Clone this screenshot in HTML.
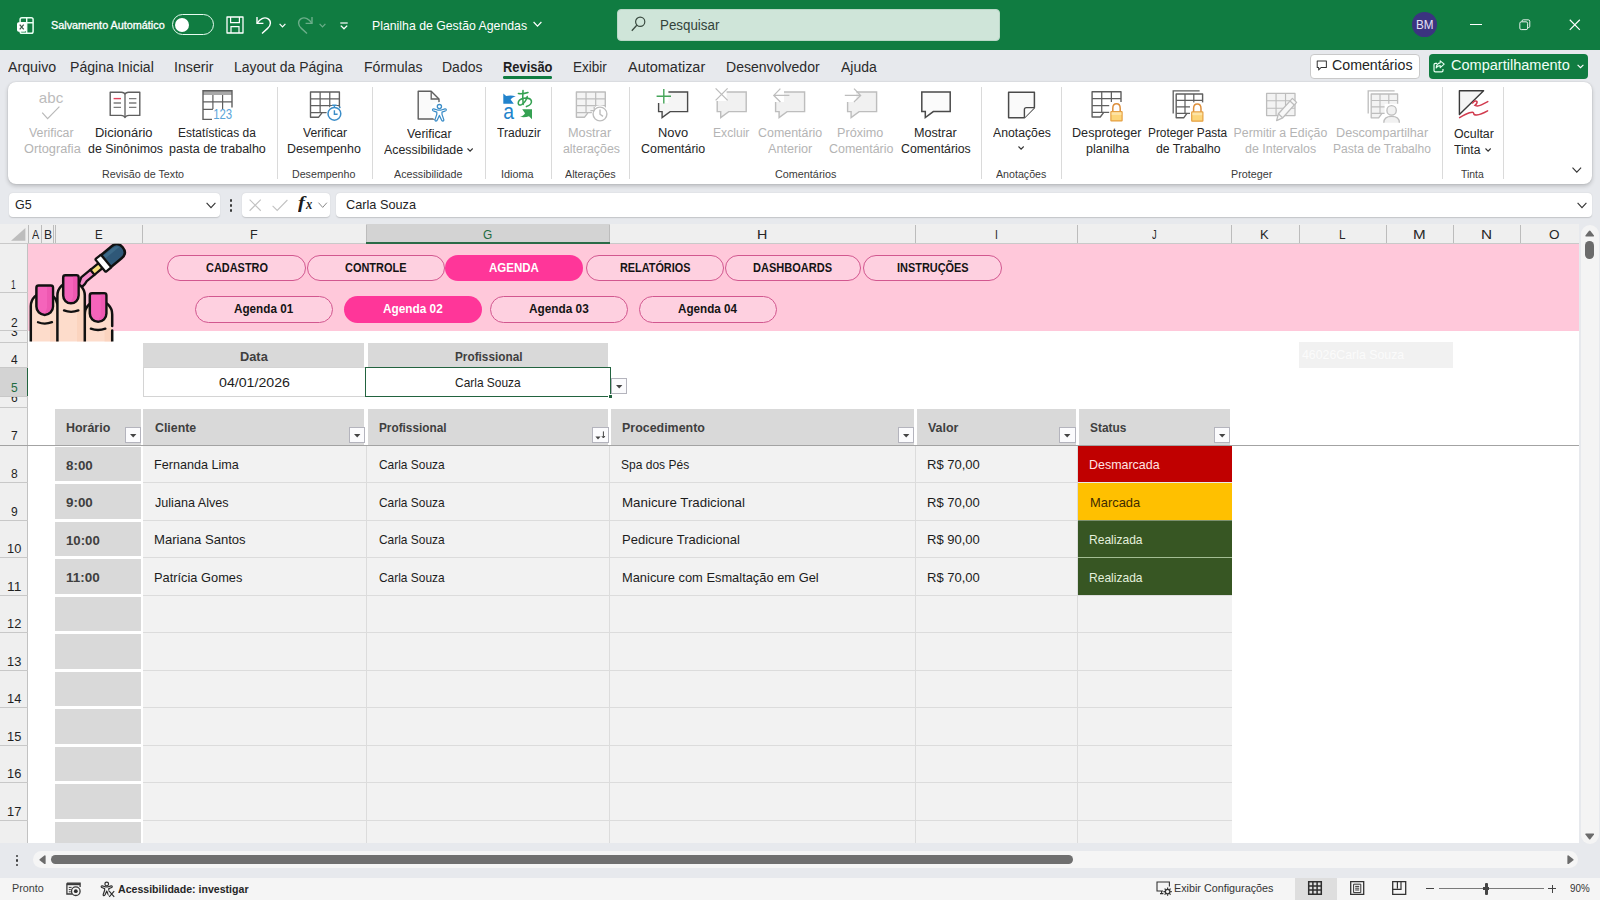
<!DOCTYPE html>
<html lang="pt-BR"><head><meta charset="utf-8"><title>Planilha de Gestão Agendas - Excel</title>
<style>
html,body{margin:0;padding:0;}
body{width:1600px;height:900px;overflow:hidden;position:relative;background:#e7e9ed;font-family:"Liberation Sans",sans-serif;}
#app{position:absolute;left:0;top:0;width:1600px;height:900px;overflow:hidden;}
#app div,#app svg,#app span.t{position:absolute;box-sizing:border-box;}
#app span.t{white-space:pre;transform-origin:0 0;display:block;}
svg{overflow:visible;}
svg text{font-family:"Liberation Sans",sans-serif;}
</style></head><body><div id="app">
<div style="left:0px;top:0px;width:1600px;height:49.5px;background:#107c41;"></div>
<svg style="left:16.5px;top:16.5px;" width="17" height="17" viewBox="0 0 17 17">
<rect x="3.1" y="0.8" width="13" height="15.4" rx="1.8" fill="none" stroke="#eafff3" stroke-width="1.5"/>
<path d="M3.1 5.7H16.1M9.7 0.8V16.2" stroke="#eafff3" stroke-width="1.4" fill="none"/>
<rect x="0" y="5.3" width="9.3" height="9.5" rx="1.7" fill="#fff"/>
<path d="M2.7 7.7L6.7 12.4M6.7 7.7L2.7 12.4" stroke="#3c5a49" stroke-width="1.25" fill="none"/>
</svg>
<span class="t" style="left:50.60px;top:20.03px;font-size:10.6px;line-height:10.6px;color:#ffffff;transform:scaleX(1.0215);-webkit-text-stroke:0.3px #ffffff;">Salvamento Automático</span>
<div style="left:172px;top:14px;width:42px;height:21px;border:1.5px solid #e6fbef;border-radius:11px;"></div>
<div style="left:175.2px;top:17.6px;width:14px;height:14px;background:#fff;border-radius:50%;"></div>
<svg style="left:226px;top:16px;" width="18" height="18" viewBox="0 0 18 18">
<path d="M1 1H17V17H1Z" fill="none" stroke="#fff" stroke-width="1.3" stroke-linejoin="round"/>
<path d="M4.6 1V6.6H13.4V1" fill="none" stroke="#fff" stroke-width="1.2"/>
<path d="M5 17V10.6H13V17" fill="none" stroke="#fff" stroke-width="1.2"/>
</svg>
<svg style="left:255px;top:15px;" width="18" height="20" viewBox="0 0 18 20">
<path d="M2 2V8.4H8.4" fill="none" stroke="#fff" stroke-width="1.4"/>
<path d="M2.3 8.2C4.6 4 9.2 1.6 12.8 3.6C16.6 5.8 16 10.6 12.6 13.4L7 18.6" fill="none" stroke="#fff" stroke-width="1.4"/>
</svg>
<svg style="left:279px;top:22.5px;" width="7" height="5" viewBox="0 0 7 5"><path d="M0.6 0.8L3.5 3.8L6.4 0.8" fill="none" stroke="#fff" stroke-width="1.2"/></svg>
<svg style="left:296px;top:15px;" width="18" height="20" viewBox="0 0 18 20">
<g opacity="0.38"><path d="M16 2V8.4H9.6" fill="none" stroke="#fff" stroke-width="1.4"/>
<path d="M15.7 8.2C13.4 4 8.8 1.6 5.2 3.6C1.4 5.8 2 10.6 5.4 13.4L11 18.6" fill="none" stroke="#fff" stroke-width="1.4"/></g>
</svg>
<svg style="left:319px;top:22.5px;" width="7" height="5" viewBox="0 0 7 5"><path d="M0.6 0.8L3.5 3.8L6.4 0.8" fill="none" stroke="#fff" stroke-width="1.2" opacity="0.38"/></svg>
<svg style="left:340px;top:21.5px;" width="8" height="8" viewBox="0 0 8 8"><path d="M0.3 1H7.7" stroke="#fff" stroke-width="1.2"/><path d="M0.8 3.6L4 6.8L7.2 3.6" fill="none" stroke="#fff" stroke-width="1.3"/></svg>
<span class="t" style="left:372.07px;top:18.93px;font-size:13.2px;line-height:13.2px;color:#ffffff;transform:scaleX(0.9316);">Planilha de Gestão Agendas</span>
<svg style="left:532.5px;top:21px;" width="9" height="7" viewBox="0 0 9 7"><path d="M0.6 1L4.5 5.2L8.4 1" fill="none" stroke="#fff" stroke-width="1.2"/></svg>
<div style="left:617px;top:9px;width:382.5px;height:32px;background:#cfe5d9;border-radius:4px;border:1px solid #b9d8c7;"></div>
<svg style="left:631px;top:16px;" width="15" height="16" viewBox="0 0 15 16"><circle cx="9.2" cy="5.8" r="4.6" fill="none" stroke="#3a4a40" stroke-width="1.2"/><path d="M5.8 9.2L0.8 14.8" stroke="#3a4a40" stroke-width="1.3"/></svg>
<span class="t" style="left:659.85px;top:17.85px;font-size:14px;line-height:14px;color:#33433a;transform:scaleX(0.9529);">Pesquisar</span>
<div style="left:1412.4px;top:12.4px;width:24.6px;height:24.6px;background:#3b3480;border-radius:50%;"></div>
<span class="t" style="left:1415.94px;top:19.17px;font-size:12.2px;line-height:12.2px;color:#e4e1f5;transform:scaleX(0.9574);">BM</span>
<div style="left:1470px;top:23.8px;width:11.5px;height:1.2px;background:#fff;"></div>
<svg style="left:1519.3px;top:18.7px;" width="11.6" height="11.6" viewBox="0 0 14 14"><rect x="1" y="3.4" width="9.4" height="9.4" rx="1.8" fill="none" stroke="#fff" stroke-width="1.1"/><path d="M3.6 3.2V2.6Q3.6 1 5.2 1H11.2Q13 1 13 2.8V8.8Q13 10.4 11.4 10.4H10.8" fill="none" stroke="#fff" stroke-width="1.1"/></svg>
<svg style="left:1569.4px;top:19.4px;" width="11.6" height="11.6" viewBox="0 0 12 12"><path d="M0.8 0.8L11.2 11.2M11.2 0.8L0.8 11.2" stroke="#fff" stroke-width="1.2"/></svg>
<span class="t" style="left:7.80px;top:59.75px;font-size:14px;line-height:14px;color:#2b2b2b;transform:scaleX(1.0150);">Arquivo</span>
<span class="t" style="left:70.29px;top:59.75px;font-size:14px;line-height:14px;color:#2b2b2b;transform:scaleX(1.0064);">Página Inicial</span>
<span class="t" style="left:173.79px;top:59.75px;font-size:14px;line-height:14px;color:#2b2b2b;transform:scaleX(1.0145);">Inserir</span>
<span class="t" style="left:233.60px;top:59.75px;font-size:14px;line-height:14px;color:#2b2b2b;transform:scaleX(0.9982);">Layout da Página</span>
<span class="t" style="left:364.00px;top:59.75px;font-size:14px;line-height:14px;color:#2b2b2b;transform:scaleX(1.0025);">Fórmulas</span>
<span class="t" style="left:442.00px;top:59.75px;font-size:14px;line-height:14px;color:#2b2b2b;transform:scaleX(1.0008);">Dados</span>
<span class="t" style="left:572.83px;top:59.75px;font-size:14px;line-height:14px;color:#2b2b2b;transform:scaleX(0.9664);">Exibir</span>
<span class="t" style="left:627.60px;top:59.75px;font-size:14px;line-height:14px;color:#2b2b2b;transform:scaleX(1.0341);">Automatizar</span>
<span class="t" style="left:725.80px;top:59.75px;font-size:14px;line-height:14px;color:#2b2b2b;transform:scaleX(1.0029);">Desenvolvedor</span>
<span class="t" style="left:840.80px;top:59.75px;font-size:14px;line-height:14px;color:#2b2b2b;transform:scaleX(0.9993);">Ajuda</span>
<span class="t" style="left:503.00px;top:59.75px;font-size:14px;line-height:14px;color:#1f1f1f;transform:scaleX(0.9219);font-weight:700;">Revisão</span>
<div style="left:503px;top:76.2px;width:49px;height:2.6px;background:#107c41;border-radius:1.3px;"></div>
<div style="left:1310px;top:53.5px;width:110px;height:25px;background:#fff;border:1px solid #c9c9c9;border-radius:4px;"></div>
<svg style="left:1315.6px;top:59.8px;" width="11.6" height="11" viewBox="0 0 12 12"><path d="M1 1H11V8.2H5.2L2.6 10.8V8.2H1Z" fill="none" stroke="#333" stroke-width="1.1" stroke-linejoin="round"/></svg>
<span class="t" style="left:1332.00px;top:59.12px;font-size:13.8px;line-height:13.8px;color:#242424;transform:scaleX(1.0291);">Comentários</span>
<div style="left:1428.5px;top:53.5px;width:159px;height:25px;background:#107c41;border-radius:4px;"></div>
<svg style="left:1432.8px;top:59.6px;" width="12" height="12.6" viewBox="0 0 12 12.6"><path d="M4 3.4H2.4Q1 3.4 1 4.8V10.4Q1 11.8 2.4 11.8H8.6Q10 11.8 10 10.4V9" fill="none" stroke="#eafff3" stroke-width="1.2"/><path d="M7.2 0.8L11.2 4.2L7.2 7.6V5.6C5.2 5.6 4 6.4 3.2 8C3.4 5 5 3.2 7.2 2.9Z" fill="none" stroke="#eafff3" stroke-width="1.1" stroke-linejoin="round"/></svg>
<span class="t" style="left:1450.50px;top:59.12px;font-size:13.8px;line-height:13.8px;color:#f2fff7;transform:scaleX(1.0534);">Compartilhamento</span>
<svg style="left:1576.5px;top:63.5px;" width="7" height="5" viewBox="0 0 7 5"><path d="M0.6 0.8L3.5 3.7L6.4 0.8" fill="none" stroke="#fff" stroke-width="1.1"/></svg>
<div style="left:8px;top:82px;width:1584px;height:102px;background:#ffffff;border-radius:8px;box-shadow:0 2px 4px rgba(0,0,0,0.2),0 0 1.5px rgba(0,0,0,0.14);"></div>
<div style="left:8.8px;top:193.2px;width:211.4px;height:23.8px;background:#fff;border-radius:4px;box-shadow:0 0.8px 1.2px rgba(0,0,0,0.16);"></div>
<span class="t" style="left:14.50px;top:199.33px;font-size:12.6px;line-height:12.6px;color:#242424;transform:scaleX(0.9935);">G5</span>
<svg style="left:206px;top:202px;" width="10" height="7" viewBox="0 0 10 7"><path d="M0.6 0.8L5 5.6L9.4 0.8" fill="none" stroke="#333" stroke-width="1.1"/></svg>
<div style="left:229.9px;top:199.4px;width:2.5px;height:2.5px;background:#3a3a3a;border-radius:1.25px;"></div>
<div style="left:229.9px;top:204.20000000000002px;width:2.5px;height:2.5px;background:#3a3a3a;border-radius:1.25px;"></div>
<div style="left:229.9px;top:209.0px;width:2.5px;height:2.5px;background:#3a3a3a;border-radius:1.25px;"></div>
<div style="left:242px;top:193.2px;width:88px;height:23.8px;background:#fff;border-radius:4px;box-shadow:0 0.8px 1.2px rgba(0,0,0,0.16);"></div>
<svg style="left:248.8px;top:198.8px;" width="12.4" height="12.4" viewBox="0 0 12 12"><path d="M0.6 0.6L11.4 11.4M11.4 0.6L0.6 11.4" stroke="#c2c2c2" stroke-width="1.1"/></svg>
<svg style="left:272px;top:198.6px;" width="16" height="12.4" viewBox="0 0 16 12"><path d="M0.6 6.6L5.2 11.2L15.4 0.8" fill="none" stroke="#c2c2c2" stroke-width="1.1"/></svg>
<span class="t" style="left:297.80px;top:195.43px;font-size:16.5px;line-height:16.5px;color:#1c1c1c;transform:scaleX(1.2562);font-weight:700;font-style:italic;font-family:'Liberation Serif',serif;">f</span>
<span class="t" style="left:305.73px;top:198.29px;font-size:13.6px;line-height:13.6px;color:#1c1c1c;transform:scaleX(0.9250);font-weight:700;font-style:italic;font-family:'Liberation Serif',serif;">x</span>
<svg style="left:318.4px;top:202.2px;" width="9.4" height="6.4" viewBox="0 0 9.4 6.4"><path d="M0.5 0.7L4.7 5.4L8.9 0.7" fill="none" stroke="#8a8a8a" stroke-width="1"/></svg>
<div style="left:335.5px;top:193.2px;width:1256px;height:23.8px;background:#fff;border-radius:4px;box-shadow:0 0.8px 1.2px rgba(0,0,0,0.16);"></div>
<span class="t" style="left:346.20px;top:199.33px;font-size:12.6px;line-height:12.6px;color:#242424;transform:scaleX(1.0100);">Carla Souza</span>
<svg style="left:1576.5px;top:201.8px;" width="10" height="7" viewBox="0 0 10 7"><path d="M0.6 0.8L5 5.6L9.4 0.8" fill="none" stroke="#333" stroke-width="1.1"/></svg>
<svg style="left:38px;top:88px;" width="28" height="34" viewBox="0 0 28 34">
<text x="0.8" y="14.9" font-size="14.4" fill="#bcbcbc" textLength="24.4" lengthAdjust="spacingAndGlyphs">abc</text>
<path d="M4.2 24.6L9.6 30.6L21.4 18.6" fill="none" stroke="#b9b9b9" stroke-width="1.2"/></svg>
<span class="t" style="left:29.40px;top:126.89px;font-size:12.3px;line-height:12.3px;color:#b4b4b4;transform:scaleX(1.0039);">Verificar</span>
<span class="t" style="left:23.60px;top:142.99px;font-size:12.3px;line-height:12.3px;color:#b4b4b4;transform:scaleX(1.0374);">Ortografia</span>
<svg style="left:108px;top:90px;" width="34" height="30" viewBox="0 0 34 30">
<path d="M2.2 2.2H13.4Q16.4 2.2 17 4.4Q17.6 2.2 20.6 2.2H31.8V25.4H21Q17.8 25.4 17 27.6Q16.2 25.4 13 25.4H2.2Z" fill="#fff" stroke="#5f5f5f" stroke-width="1.4" stroke-linejoin="round"/>
<path d="M17 4.4V27" stroke="#5f5f5f" stroke-width="1.3"/>
<path d="M5.6 8.6H13" stroke="#e0435c" stroke-width="1.4"/>
<path d="M5.6 13H13M5.6 17.4H13M21 8.6H28.4M21 13H28.4M21 17.4H28.4" stroke="#7d7d7d" stroke-width="1.3"/></svg>
<span class="t" style="left:95.25px;top:126.89px;font-size:12.3px;line-height:12.3px;color:#262626;transform:scaleX(1.0530);">Dicionário</span>
<span class="t" style="left:87.50px;top:142.99px;font-size:12.3px;line-height:12.3px;color:#262626;transform:scaleX(1.0072);">de Sinônimos</span>
<svg style="left:202px;top:90px;" width="32" height="31" viewBox="0 0 32 31">
<rect x="1" y="0.8" width="29" height="28.6" fill="#fff"/>
<rect x="1" y="0.8" width="29" height="4.2" fill="#a9a9a9"/>
<path d="M10.9 5V19M20.6 5V19M1 11.9H30M1 19.4H10.9" stroke="#5f5f5f" stroke-width="1.2" fill="none"/>
<path d="M30 17.4V0.8H1V29.4H10" fill="none" stroke="#5f5f5f" stroke-width="1.4"/>
<text x="11.2" y="29.2" font-size="14.2" fill="#5aa5da" textLength="19" lengthAdjust="spacingAndGlyphs">123</text></svg>
<span class="t" style="left:178.43px;top:126.89px;font-size:12.3px;line-height:12.3px;color:#262626;transform:scaleX(0.9731);">Estatísticas da</span>
<span class="t" style="left:169.40px;top:142.99px;font-size:12.3px;line-height:12.3px;color:#262626;transform:scaleX(1.0190);">pasta de trabalho</span>
<span class="t" style="left:102.40px;top:169.13px;font-size:10.6px;line-height:10.6px;color:#3a3a3a;transform:scaleX(1.0125);">Revisão de Texto</span>
<div style="left:276.8px;top:87px;width:1px;height:92px;background:#dadada;"></div>
<svg style="left:309px;top:90px;" width="34" height="32" viewBox="0 0 34 32">
<path d="M1.5 2H30.4V22.6H13.138333333333332L9.688333333333333 27.200000000000003H1.5Z" fill="#fff" stroke="none"/><path d="M11.13 2V22.6M20.77 2V22.6M1.5 8.87H30.4M1.5 15.73H30.4M1.5 22.6H13.138333333333332" stroke="#5f5f5f" stroke-width="1.232" fill="none"/><path d="M1.5 2H30.4V22.6H13.138333333333332L9.688333333333333 27.200000000000003H1.5Z" fill="none" stroke="#5f5f5f" stroke-width="1.4" stroke-linejoin="round"/>
<circle cx="25.4" cy="23.4" r="8" fill="#fff"/>
<circle cx="25.4" cy="23.8" r="6.4" fill="#fff" stroke="#3b8dc8" stroke-width="1.5"/>
<path d="M23.2 15.2H27.6M25.4 15.4V17.4M30.2 18L31.4 16.8" stroke="#3b8dc8" stroke-width="1.4" fill="none"/>
<path d="M25.4 20.2V24.2H28.6" stroke="#3b8dc8" stroke-width="1.4" fill="none"/></svg>
<span class="t" style="left:303.00px;top:126.89px;font-size:12.3px;line-height:12.3px;color:#262626;transform:scaleX(0.9926);">Verificar</span>
<span class="t" style="left:287.39px;top:142.99px;font-size:12.3px;line-height:12.3px;color:#262626;transform:scaleX(1.0094);">Desempenho</span>
<span class="t" style="left:291.85px;top:169.13px;font-size:10.6px;line-height:10.6px;color:#3a3a3a;transform:scaleX(1.0060);">Desempenho</span>
<div style="left:371.9px;top:87px;width:1px;height:92px;background:#dadada;"></div>
<svg style="left:416px;top:89px;" width="32" height="34" viewBox="0 0 32 34">
<path d="M2.2 2.2H15.2L23 10V30H2.2Z" fill="#fafafa" stroke="#5f5f5f" stroke-width="1.4" stroke-linejoin="round"/>
<path d="M15.2 2.2V10H23" fill="none" stroke="#5f5f5f" stroke-width="1.3"/>
<circle cx="23.4" cy="22.4" r="9.4" fill="#fff"/>
<circle cx="23.4" cy="17.6" r="2.1" fill="#fff" stroke="#3b8dc8" stroke-width="1.3"/>
<path d="M16.6 21.2Q16.2 19.6 17.8 19.8L21.6 21H25.2L29 19.8Q30.6 19.6 30.2 21.2Q29.8 22 28.8 22.2L26 23.2V25.4L27.8 30.6Q28 32 26.8 32Q25.8 32 25.4 30.8L23.4 26.4L21.4 30.8Q21 32 20 32Q18.8 32 19 30.6L20.8 25.4V23.2L18 22.2Q17 22 16.6 21.2Z" fill="#fff" stroke="#3b8dc8" stroke-width="1.25" stroke-linejoin="round"/></svg>
<span class="t" style="left:406.50px;top:127.79px;font-size:12.3px;line-height:12.3px;color:#262626;transform:scaleX(1.0039);">Verificar</span>
<span class="t" style="left:383.80px;top:144.39px;font-size:12.3px;line-height:12.3px;color:#262626;transform:scaleX(1.0055);">Acessibilidade</span>
<svg style="left:467.4px;top:148.0px;" width="6.2" height="3.6" viewBox="0 0 6.2 3.6"><path d="M0.5 0.5L3.1 3.2L5.7 0.5" fill="none" stroke="#333" stroke-width="1.1"/></svg>
<span class="t" style="left:393.75px;top:169.13px;font-size:10.6px;line-height:10.6px;color:#3a3a3a;transform:scaleX(1.0097);">Acessibilidade</span>
<div style="left:485.1px;top:87px;width:1px;height:92px;background:#dadada;"></div>
<svg style="left:496px;top:84px;" width="50" height="40" viewBox="0 0 50 40">
<path d="M7.3 9.4L10.2 12.1Q15 10.8 19.8 12.4Q15.6 13.4 14.6 15.6L17.8 19.7H7.3Z" fill="#2283cc"/>
<text x="7.2" y="34.9" font-size="21.5" fill="#2283cc" textLength="10.8" lengthAdjust="spacingAndGlyphs">a</text>
<g fill="none" stroke="#35a152" stroke-width="1.55" stroke-linecap="round" stroke-linejoin="round">
<path d="M22.4 9.6Q27 10.2 32 8.6"/>
<path d="M27 6.6Q26.4 12 27.2 20.4"/>
<path d="M31.2 12.6Q29.6 18.4 25.6 20.6Q22.6 22 22.2 19.2Q22.2 15.4 28 14.2Q34.6 13.6 35.4 17Q36 20.6 30.4 22.6"/></g>
<path d="M26.2 25.3H36V35.2L33 32.2Q28.6 33.8 24 32.8Q28.2 31.6 29 29.2Z" fill="#35a152"/></svg>
<span class="t" style="left:497.00px;top:126.89px;font-size:12.3px;line-height:12.3px;color:#262626;transform:scaleX(0.9807);">Traduzir</span>
<span class="t" style="left:501.05px;top:169.13px;font-size:10.6px;line-height:10.6px;color:#3a3a3a;transform:scaleX(1.0249);">Idioma</span>
<div style="left:550.9px;top:87px;width:1px;height:92px;background:#dadada;"></div>
<svg style="left:575px;top:90px;" width="34" height="32" viewBox="0 0 34 32">
<path d="M1.4 2H30.299999999999997V22.6H13.038333333333332L9.588333333333333 27.200000000000003H1.4Z" fill="#f4f4f4" stroke="none"/><path d="M11.03 2V22.6M20.67 2V22.6M1.4 8.87H30.299999999999997M1.4 15.73H30.299999999999997M1.4 22.6H13.038333333333332" stroke="#bdbdbd" stroke-width="1.232" fill="none"/><path d="M1.4 2H30.299999999999997V22.6H13.038333333333332L9.588333333333333 27.200000000000003H1.4Z" fill="none" stroke="#bdbdbd" stroke-width="1.4" stroke-linejoin="round"/>
<circle cx="25" cy="23.6" r="8.4" fill="#fff"/>
<circle cx="25" cy="24" r="6.9" fill="#fff" stroke="#bdbdbd" stroke-width="1.4"/>
<path d="M25 19.6V24.2L28 26.4" stroke="#bdbdbd" stroke-width="1.4" fill="none"/>
<path d="M15.4 20.6H19.2V16.8" stroke="#bdbdbd" stroke-width="1.3" fill="none"/></svg>
<span class="t" style="left:568.37px;top:126.89px;font-size:12.3px;line-height:12.3px;color:#b4b4b4;transform:scaleX(1.0347);">Mostrar</span>
<span class="t" style="left:562.80px;top:142.99px;font-size:12.3px;line-height:12.3px;color:#b4b4b4;transform:scaleX(1.0035);">alterações</span>
<span class="t" style="left:564.50px;top:169.13px;font-size:10.6px;line-height:10.6px;color:#3a3a3a;transform:scaleX(1.0127);">Alterações</span>
<div style="left:629.1px;top:87px;width:1px;height:92px;background:#dadada;"></div>
<svg style="left:655px;top:86px;" width="36" height="34" viewBox="0 0 36 34">
<path d="M3.6 6H32.6V25.6H15.1L7.1 31.6V25.6H3.6Z" fill="#f5f5f5" stroke="#4a4a4a" stroke-width="1.4" stroke-linejoin="miter"/>
<rect x="0" y="0" width="13.4" height="17" fill="#fff"/>
<path d="M8.8 3V17.6M1.6 10.2H16" stroke="#46a55a" stroke-width="1.4" fill="none"/></svg>
<span class="t" style="left:657.65px;top:126.89px;font-size:12.3px;line-height:12.3px;color:#262626;transform:scaleX(1.0474);">Novo</span>
<span class="t" style="left:641.00px;top:142.99px;font-size:12.3px;line-height:12.3px;color:#262626;transform:scaleX(1.0106);">Comentário</span>
<svg style="left:714px;top:86px;" width="36" height="34" viewBox="0 0 36 34">
<path d="M3.2 6H32.2V25.6H14.7L6.699999999999999 31.6V25.6H3.2Z" fill="#f1f1f1" stroke="#bdbdbd" stroke-width="1.4" stroke-linejoin="miter"/>
<rect x="0" y="0" width="12.6" height="15" fill="#fff"/>
<path d="M1.6 2.4L13.6 14.4M13.6 2.4L1.6 14.4" stroke="#bdbdbd" stroke-width="1.3" fill="none"/></svg>
<span class="t" style="left:712.81px;top:126.89px;font-size:12.3px;line-height:12.3px;color:#b4b4b4;transform:scaleX(0.9857);">Excluir</span>
<svg style="left:772px;top:86px;" width="36" height="34" viewBox="0 0 36 34">
<path d="M3.6 6H32.6V25.6H15.1L7.1 31.6V25.6H3.6Z" fill="#f1f1f1" stroke="#bdbdbd" stroke-width="1.4" stroke-linejoin="miter"/>
<rect x="0" y="2" width="12" height="14" fill="#fff"/>
<path d="M1.8 9.4H17.4M8.4 2.6L1.8 9.4L8.4 16" stroke="#bdbdbd" stroke-width="1.3" fill="none"/></svg>
<span class="t" style="left:757.50px;top:126.89px;font-size:12.3px;line-height:12.3px;color:#b4b4b4;transform:scaleX(1.0106);">Comentário</span>
<span class="t" style="left:767.90px;top:142.99px;font-size:12.3px;line-height:12.3px;color:#b4b4b4;transform:scaleX(1.0287);">Anterior</span>
<svg style="left:844px;top:86px;" width="36" height="34" viewBox="0 0 36 34">
<path d="M3.6 6H32.6V25.6H15.1L7.1 31.6V25.6H3.6Z" fill="#f1f1f1" stroke="#bdbdbd" stroke-width="1.4" stroke-linejoin="miter"/>
<rect x="0" y="2" width="12.4" height="14" fill="#fff"/>
<path d="M0.8 9.4H16.6M10 2.6L16.6 9.4L10 16" stroke="#bdbdbd" stroke-width="1.3" fill="none"/></svg>
<span class="t" style="left:837.47px;top:126.89px;font-size:12.3px;line-height:12.3px;color:#b4b4b4;transform:scaleX(1.0278);">Próximo</span>
<span class="t" style="left:829.40px;top:142.99px;font-size:12.3px;line-height:12.3px;color:#b4b4b4;transform:scaleX(1.0138);">Comentário</span>
<svg style="left:920px;top:86px;" width="34" height="34" viewBox="0 0 34 34">
<path d="M1.8 6H30.2V25.6H13.3L5.3 31.6V25.6H1.8Z" fill="#fbfbfb" stroke="#4a4a4a" stroke-width="1.5" stroke-linejoin="miter"/></svg>
<span class="t" style="left:913.57px;top:126.89px;font-size:12.3px;line-height:12.3px;color:#262626;transform:scaleX(1.0273);">Mostrar</span>
<span class="t" style="left:901.00px;top:142.99px;font-size:12.3px;line-height:12.3px;color:#262626;transform:scaleX(1.0004);">Comentários</span>
<span class="t" style="left:774.50px;top:169.13px;font-size:10.6px;line-height:10.6px;color:#3a3a3a;transform:scaleX(1.0207);">Comentários</span>
<div style="left:981.0px;top:87px;width:1px;height:92px;background:#dadada;"></div>
<svg style="left:1006px;top:90px;" width="32" height="30" viewBox="0 0 32 30">
<path d="M2.6 2.2H28.4V17.6L18.4 27.8H2.6Z" fill="#fafafa" stroke="#4a4a4a" stroke-width="1.5" stroke-linejoin="round"/>
<path d="M28.4 17.6H20.4Q18.4 17.6 18.4 19.6V27.8" fill="#fff" stroke="#4a4a4a" stroke-width="1.4" stroke-linejoin="round"/></svg>
<span class="t" style="left:992.90px;top:126.89px;font-size:12.3px;line-height:12.3px;color:#262626;transform:scaleX(0.9952);">Anotações</span>
<svg style="left:1017.9px;top:146.2px;" width="6.2" height="3.6" viewBox="0 0 6.2 3.6"><path d="M0.5 0.5L3.1 3.2L5.7 0.5" fill="none" stroke="#333" stroke-width="1.1"/></svg>
<span class="t" style="left:995.50px;top:169.13px;font-size:10.6px;line-height:10.6px;color:#3a3a3a;transform:scaleX(1.0047);">Anotações</span>
<div style="left:1060.9px;top:87px;width:1px;height:92px;background:#dadada;"></div>
<svg style="left:1090px;top:90px;" width="36" height="33" viewBox="0 0 36 33">
<path d="M2.1 1.8H31.0V22.400000000000002H13.738333333333332L10.288333333333332 27.0H2.1Z" fill="#fff" stroke="none"/><path d="M11.73 1.8V22.400000000000002M21.37 1.8V22.400000000000002M2.1 8.67H31.0M2.1 15.53H31.0M2.1 22.400000000000002H13.738333333333332" stroke="#5f5f5f" stroke-width="1.232" fill="none"/><path d="M2.1 1.8H31.0V22.400000000000002H13.738333333333332L10.288333333333332 27.0H2.1Z" fill="none" stroke="#5f5f5f" stroke-width="1.4" stroke-linejoin="round"/>
<rect x="19.2" y="12" width="14.6" height="20.4" fill="#fff"/>
<g transform="translate(20.3 12.9) scale(1.0)"><path d="M2.5 9.4V5.3Q2.5 0.8 6.2 0.8Q9.9 0.8 9.9 5.3V9.4" fill="#fff" stroke="#dd8f3c" stroke-width="1.5"/><rect x="0.6" y="8.7" width="11.2" height="9.3" rx="0.5" fill="#fcd579" stroke="#e5a043" stroke-width="1.2"/><rect x="1.3" y="9.4" width="9.8" height="2.6" fill="#fde6ae" opacity="0.85"/></g></svg>
<span class="t" style="left:1072.07px;top:126.89px;font-size:12.3px;line-height:12.3px;color:#262626;transform:scaleX(1.0259);">Desproteger</span>
<span class="t" style="left:1085.50px;top:142.99px;font-size:12.3px;line-height:12.3px;color:#262626;transform:scaleX(1.0172);">planilha</span>
<svg style="left:1171px;top:89px;" width="36" height="34" viewBox="0 0 36 34">
<path d="M2.2 24.4V1.8H28.6" fill="none" stroke="#5f5f5f" stroke-width="1.3"/>
<path d="M5.2 5H31.599999999999998V24.4H15.98L12.68 28.799999999999997H5.2Z" fill="#fff" stroke="none"/><path d="M14.00 5V24.4M22.80 5V24.4M5.2 11.47H31.599999999999998M5.2 17.93H31.599999999999998M5.2 24.4H15.98" stroke="#5f5f5f" stroke-width="1.232" fill="none"/><path d="M5.2 5H31.599999999999998V24.4H15.98L12.68 28.799999999999997H5.2Z" fill="none" stroke="#5f5f5f" stroke-width="1.4" stroke-linejoin="round"/>
<rect x="19" y="13.4" width="14.6" height="20.4" fill="#fff"/>
<g transform="translate(20.1 14.2) scale(1.0)"><path d="M2.5 9.4V5.3Q2.5 0.8 6.2 0.8Q9.9 0.8 9.9 5.3V9.4" fill="#fff" stroke="#dd8f3c" stroke-width="1.5"/><rect x="0.6" y="8.7" width="11.2" height="9.3" rx="0.5" fill="#fcd579" stroke="#e5a043" stroke-width="1.2"/><rect x="1.3" y="9.4" width="9.8" height="2.6" fill="#fde6ae" opacity="0.85"/></g></svg>
<span class="t" style="left:1147.54px;top:126.89px;font-size:12.3px;line-height:12.3px;color:#262626;transform:scaleX(0.9644);">Proteger Pasta</span>
<span class="t" style="left:1155.50px;top:142.99px;font-size:12.3px;line-height:12.3px;color:#262626;transform:scaleX(0.9952);">de Trabalho</span>
<svg style="left:1265px;top:91px;" width="34" height="32" viewBox="0 0 34 32">
<path d="M1.6 2.4H30.0V24.599999999999998H1.6Z" fill="#f3f3f3" stroke="none"/><path d="M11.07 2.4V24.599999999999998M20.53 2.4V24.599999999999998M1.6 9.80H30.0M1.6 17.20H30.0" stroke="#bdbdbd" stroke-width="1.1440000000000001" fill="none"/><path d="M1.6 2.4H30.0V24.599999999999998H1.6Z" fill="none" stroke="#bdbdbd" stroke-width="1.3" stroke-linejoin="round"/>
<path d="M27.4 7.4L31.6 11.4L17.8 26.8L11.6 29.6L13.4 22.8Z" fill="#f8f8f8" stroke="#bdbdbd" stroke-width="1.3" stroke-linejoin="round"/>
<path d="M25 10L29.2 14M13.6 23L17.6 26.8" stroke="#bdbdbd" stroke-width="1.2" fill="none"/></svg>
<span class="t" style="left:1233.60px;top:126.89px;font-size:12.3px;line-height:12.3px;color:#b4b4b4;transform:scaleX(1.0000);">Permitir a Edição</span>
<span class="t" style="left:1245.00px;top:142.99px;font-size:12.3px;line-height:12.3px;color:#b4b4b4;transform:scaleX(1.0103);">de Intervalos</span>
<svg style="left:1366px;top:89px;" width="36" height="34" viewBox="0 0 36 34">
<path d="M2.2 24.4V1.8H28.6" fill="none" stroke="#bdbdbd" stroke-width="1.3"/>
<path d="M5.2 5H31.599999999999998V24.4H15.98L12.68 28.799999999999997H5.2Z" fill="#f3f3f3" stroke="none"/><path d="M14.00 5V24.4M22.80 5V24.4M5.2 11.47H31.599999999999998M5.2 17.93H31.599999999999998M5.2 24.4H15.98" stroke="#bdbdbd" stroke-width="1.1440000000000001" fill="none"/><path d="M5.2 5H31.599999999999998V24.4H15.98L12.68 28.799999999999997H5.2Z" fill="none" stroke="#bdbdbd" stroke-width="1.3" stroke-linejoin="round"/>
<rect x="18.6" y="14.8" width="16" height="19" fill="#fff"/>
<circle cx="25.6" cy="21.4" r="4.7" fill="#f1f1f1" stroke="#bdbdbd" stroke-width="1.3"/>
<path d="M17.8 33.8Q17.8 27.4 25.6 27.4Q33.4 27.4 33.4 33.8" fill="#f1f1f1" stroke="#bdbdbd" stroke-width="1.3"/></svg>
<span class="t" style="left:1335.97px;top:126.89px;font-size:12.3px;line-height:12.3px;color:#b4b4b4;transform:scaleX(1.0290);">Descompartilhar</span>
<span class="t" style="left:1333.42px;top:142.99px;font-size:12.3px;line-height:12.3px;color:#b4b4b4;transform:scaleX(0.9811);">Pasta de Trabalho</span>
<span class="t" style="left:1230.65px;top:169.13px;font-size:10.6px;line-height:10.6px;color:#3a3a3a;transform:scaleX(1.0143);">Proteger</span>
<div style="left:1441.5px;top:87px;width:1px;height:92px;background:#dadada;"></div>
<svg style="left:1457px;top:89px;" width="34" height="32" viewBox="0 0 34 32">
<path d="M2.4 1.8H26.6L2.4 25.6Z" fill="#f5f5f5" stroke="#3a3a3a" stroke-width="1.4" stroke-linejoin="round"/>
<path d="M15.6 14Q18.4 10.8 20 12.6Q20.6 14.2 18 16.4Q20.8 17.6 24.4 15.8L30.8 12.6" fill="none" stroke="#d13b4e" stroke-width="1.5" stroke-linecap="round"/>
<path d="M2.6 28.6Q9 25 12.4 23.8Q16.4 22.4 16.6 24.2Q16.6 26 19.6 26Q24 25.4 30.6 21.8" fill="none" stroke="#d13b4e" stroke-width="1.5" stroke-linecap="round"/></svg>
<span class="t" style="left:1453.50px;top:127.79px;font-size:12.3px;line-height:12.3px;color:#262626;transform:scaleX(1.0039);">Ocultar</span>
<span class="t" style="left:1453.90px;top:144.39px;font-size:12.3px;line-height:12.3px;color:#262626;transform:scaleX(0.9833);">Tinta</span>
<svg style="left:1485px;top:148.0px;" width="6.2" height="3.6" viewBox="0 0 6.2 3.6"><path d="M0.5 0.5L3.1 3.2L5.7 0.5" fill="none" stroke="#333" stroke-width="1.1"/></svg>
<span class="t" style="left:1461.40px;top:169.13px;font-size:10.6px;line-height:10.6px;color:#3a3a3a;transform:scaleX(0.9794);">Tinta</span>
<div style="left:1502.9px;top:87px;width:1px;height:92px;background:#dadada;"></div>
<svg style="left:1572px;top:167.2px;" width="9.6" height="6" viewBox="0 0 9.6 6"><path d="M0.5 0.6L4.8 5.2L9.1 0.6" fill="none" stroke="#333" stroke-width="1.1"/></svg>
<div style="left:0px;top:224px;width:1578.6px;height:619.3px;background:#ffffff;"></div>
<div style="left:0px;top:224px;width:1578.6px;height:19.5px;background:#efefef;"></div>
<div style="left:0px;top:243.5px;width:28px;height:600px;background:#efefef;"></div>
<svg style="left:10.8px;top:228px;" width="14.4" height="12.8" viewBox="0 0 14.4 12.8"><path d="M14.4 0V12.8H0Z" fill="#bdbdbd"/></svg>
<div style="left:366px;top:224px;width:243.7px;height:19.5px;background:#d3d3d3;"></div>
<div style="left:366px;top:242.2px;width:243.7px;height:1.5px;background:#2a6b47;"></div>
<div style="left:41.2px;top:224.6px;width:1px;height:18.9px;background:#bcbcbc;"></div>
<span class="t" style="left:32.15px;top:229.17px;font-size:12.2px;line-height:12.2px;color:#262626;transform:scaleX(0.8877);">A</span>
<div style="left:52.7px;top:224.6px;width:1px;height:18.9px;background:#bcbcbc;"></div>
<span class="t" style="left:44.25px;top:229.17px;font-size:12.2px;line-height:12.2px;color:#262626;transform:scaleX(0.9983);">B</span>
<div style="left:142.0px;top:224.6px;width:1px;height:18.9px;background:#bcbcbc;"></div>
<span class="t" style="left:94.71px;top:229.17px;font-size:12.2px;line-height:12.2px;color:#262626;transform:scaleX(0.9413);">E</span>
<div style="left:365.5px;top:224.6px;width:1px;height:18.9px;background:#bcbcbc;"></div>
<span class="t" style="left:250.12px;top:229.17px;font-size:12.2px;line-height:12.2px;color:#262626;transform:scaleX(1.0319);">F</span>
<div style="left:609.2px;top:224.6px;width:1px;height:18.9px;background:#bcbcbc;"></div>
<span class="t" style="left:483.45px;top:229.17px;font-size:12.2px;line-height:12.2px;color:#1e6b41;transform:scaleX(0.9773);">G</span>
<div style="left:914.9px;top:224.6px;width:1px;height:18.9px;background:#bcbcbc;"></div>
<span class="t" style="left:757.28px;top:229.17px;font-size:12.2px;line-height:12.2px;color:#262626;transform:scaleX(1.1696);">H</span>
<div style="left:1076.7px;top:224.6px;width:1px;height:18.9px;background:#bcbcbc;"></div>
<span class="t" style="left:994.60px;top:229.17px;font-size:12.2px;line-height:12.2px;color:#262626;transform:scaleX(0.8481);">I</span>
<div style="left:1231.0px;top:224.6px;width:1px;height:18.9px;background:#bcbcbc;"></div>
<span class="t" style="left:1152.05px;top:229.17px;font-size:12.2px;line-height:12.2px;color:#262626;transform:scaleX(0.7667);">J</span>
<div style="left:1298.5px;top:224.6px;width:1px;height:18.9px;background:#bcbcbc;"></div>
<span class="t" style="left:1260.43px;top:229.17px;font-size:12.2px;line-height:12.2px;color:#262626;transform:scaleX(1.0696);">K</span>
<div style="left:1385.5px;top:224.6px;width:1px;height:18.9px;background:#bcbcbc;"></div>
<span class="t" style="left:1338.63px;top:229.17px;font-size:12.2px;line-height:12.2px;color:#262626;transform:scaleX(0.9662);">L</span>
<div style="left:1452.5px;top:224.6px;width:1px;height:18.9px;background:#bcbcbc;"></div>
<span class="t" style="left:1412.66px;top:229.17px;font-size:12.2px;line-height:12.2px;color:#262626;transform:scaleX(1.2439);">M</span>
<div style="left:1520.0px;top:224.6px;width:1px;height:18.9px;background:#bcbcbc;"></div>
<span class="t" style="left:1481.09px;top:229.17px;font-size:12.2px;line-height:12.2px;color:#262626;transform:scaleX(1.2552);">N</span>
<div style="left:1578.5px;top:224.6px;width:1px;height:18.9px;background:#bcbcbc;"></div>
<span class="t" style="left:1549.20px;top:229.17px;font-size:12.2px;line-height:12.2px;color:#262626;transform:scaleX(1.1106);">O</span>
<div style="left:27.5px;top:224.6px;width:1px;height:18.9px;background:#bcbcbc;"></div>
<div style="left:54.6px;top:224.6px;width:1px;height:18.9px;background:#bcbcbc;"></div>
<div style="left:0px;top:243px;width:1578.6px;height:1px;background:#c9c9c9;"></div>
<div style="left:366px;top:242.2px;width:243.7px;height:1.5px;background:#2a6b47;"></div>
<div style="left:27.4px;top:243.5px;width:1px;height:600px;background:#c2c2c2;"></div>
<div style="left:0px;top:367.5px;width:27.5px;height:29.3px;background:#d3d3d3;"></div>
<div style="left:26.6px;top:367.5px;width:1.8px;height:29.3px;background:#22633f;"></div>
<div style="left:0px;top:292.0px;width:27.5px;height:1px;background:#c8c8c8;"></div>
<div style="left:0px;top:244.0px;width:27px;height:48.5px;overflow:hidden"><span class="t" style="left:11.20px;top:35.06px;font-size:12.8px;line-height:12.8px;color:#1f1f1f;transform:scaleX(0.6564);">1</span></div>
<div style="left:0px;top:330.0px;width:27.5px;height:1px;background:#c8c8c8;"></div>
<div style="left:0px;top:293.0px;width:27px;height:37.5px;overflow:hidden"><span class="t" style="left:10.50px;top:24.06px;font-size:12.8px;line-height:12.8px;color:#1f1f1f;transform:scaleX(0.9418);">2</span></div>
<div style="left:0px;top:341.5px;width:27.5px;height:1px;background:#c8c8c8;"></div>
<div style="left:0px;top:331.0px;width:27px;height:11.0px;overflow:hidden"><span class="t" style="left:10.50px;top:-4.94px;font-size:12.8px;line-height:12.8px;color:#1f1f1f;transform:scaleX(0.9418);">3</span></div>
<div style="left:0px;top:367.0px;width:27.5px;height:1px;background:#c8c8c8;"></div>
<div style="left:0px;top:342.5px;width:27px;height:25.0px;overflow:hidden"><span class="t" style="left:10.50px;top:11.56px;font-size:12.8px;line-height:12.8px;color:#1f1f1f;transform:scaleX(0.9418);">4</span></div>
<div style="left:0px;top:396.3px;width:27.5px;height:1px;background:#c8c8c8;"></div>
<div style="left:0px;top:368.0px;width:27px;height:28.80000000000001px;overflow:hidden"><span class="t" style="left:10.50px;top:14.06px;font-size:12.8px;line-height:12.8px;color:#1e6b41;transform:scaleX(0.9418);">5</span></div>
<div style="left:0px;top:407.0px;width:27.5px;height:1px;background:#c8c8c8;"></div>
<div style="left:0px;top:397.3px;width:27px;height:10.199999999999989px;overflow:hidden"><span class="t" style="left:10.50px;top:-4.94px;font-size:12.8px;line-height:12.8px;color:#1f1f1f;transform:scaleX(0.9418);">6</span></div>
<div style="left:0px;top:444.5px;width:27.5px;height:1px;background:#c8c8c8;"></div>
<div style="left:0px;top:408.0px;width:27px;height:37.0px;overflow:hidden"><span class="t" style="left:10.50px;top:22.06px;font-size:12.8px;line-height:12.8px;color:#1f1f1f;transform:scaleX(0.9418);">7</span></div>
<div style="left:0px;top:482.0px;width:27.5px;height:1px;background:#c8c8c8;"></div>
<div style="left:0px;top:445.5px;width:27px;height:37.0px;overflow:hidden"><span class="t" style="left:10.50px;top:22.56px;font-size:12.8px;line-height:12.8px;color:#1f1f1f;transform:scaleX(0.9418);">8</span></div>
<div style="left:0px;top:519.5px;width:27.5px;height:1px;background:#c8c8c8;"></div>
<div style="left:0px;top:483.0px;width:27px;height:37.0px;overflow:hidden"><span class="t" style="left:10.50px;top:22.56px;font-size:12.8px;line-height:12.8px;color:#1f1f1f;transform:scaleX(0.9418);">9</span></div>
<div style="left:0px;top:557.0px;width:27.5px;height:1px;background:#c8c8c8;"></div>
<div style="left:0px;top:520.5px;width:27px;height:37.0px;overflow:hidden"><span class="t" style="left:7.00px;top:22.56px;font-size:12.8px;line-height:12.8px;color:#1f1f1f;transform:scaleX(1.0059);">10</span></div>
<div style="left:0px;top:594.5px;width:27.5px;height:1px;background:#c8c8c8;"></div>
<div style="left:0px;top:558.0px;width:27px;height:37.0px;overflow:hidden"><span class="t" style="left:7.00px;top:22.56px;font-size:12.8px;line-height:12.8px;color:#1f1f1f;transform:scaleX(1.0774);">11</span></div>
<div style="left:0px;top:632.0px;width:27.5px;height:1px;background:#c8c8c8;"></div>
<div style="left:0px;top:595.5px;width:27px;height:37.0px;overflow:hidden"><span class="t" style="left:7.00px;top:22.56px;font-size:12.8px;line-height:12.8px;color:#1f1f1f;transform:scaleX(1.0059);">12</span></div>
<div style="left:0px;top:669.5px;width:27.5px;height:1px;background:#c8c8c8;"></div>
<div style="left:0px;top:633.0px;width:27px;height:37.0px;overflow:hidden"><span class="t" style="left:7.00px;top:22.56px;font-size:12.8px;line-height:12.8px;color:#1f1f1f;transform:scaleX(1.0059);">13</span></div>
<div style="left:0px;top:707.0px;width:27.5px;height:1px;background:#c8c8c8;"></div>
<div style="left:0px;top:670.5px;width:27px;height:37.0px;overflow:hidden"><span class="t" style="left:7.00px;top:22.56px;font-size:12.8px;line-height:12.8px;color:#1f1f1f;transform:scaleX(1.0059);">14</span></div>
<div style="left:0px;top:744.5px;width:27.5px;height:1px;background:#c8c8c8;"></div>
<div style="left:0px;top:708.0px;width:27px;height:37.0px;overflow:hidden"><span class="t" style="left:7.00px;top:22.56px;font-size:12.8px;line-height:12.8px;color:#1f1f1f;transform:scaleX(1.0059);">15</span></div>
<div style="left:0px;top:782.0px;width:27.5px;height:1px;background:#c8c8c8;"></div>
<div style="left:0px;top:745.5px;width:27px;height:37.0px;overflow:hidden"><span class="t" style="left:7.00px;top:22.56px;font-size:12.8px;line-height:12.8px;color:#1f1f1f;transform:scaleX(1.0059);">16</span></div>
<div style="left:0px;top:819.5px;width:27.5px;height:1px;background:#c8c8c8;"></div>
<div style="left:0px;top:783.0px;width:27px;height:37.0px;overflow:hidden"><span class="t" style="left:7.00px;top:22.56px;font-size:12.8px;line-height:12.8px;color:#1f1f1f;transform:scaleX(1.0059);">17</span></div>
<div style="left:0px;top:820.5px;width:27px;height:22.5px;overflow:hidden"><span class="t" style="left:7.00px;top:22.56px;font-size:12.8px;line-height:12.8px;color:#1f1f1f;transform:scaleX(1.0059);">18</span></div>
<div style="left:28px;top:243.8px;width:1550.6px;height:87px;background:#ffc8da;"></div>
<div style="left:167px;top:254.8px;width:138.5px;height:26.399999999999977px;background:#fed0e0;border-radius:13.199999999999989px;border:1.1px solid #d2578f;"></div>
<span class="t" style="left:205.50px;top:261.88px;font-size:12.9px;line-height:12.9px;color:#141414;transform:scaleX(0.8491);font-weight:700;">CADASTRO</span>
<div style="left:307px;top:254.8px;width:137.5px;height:26.399999999999977px;background:#fed0e0;border-radius:13.199999999999989px;border:1.1px solid #d2578f;"></div>
<span class="t" style="left:345.00px;top:261.88px;font-size:12.9px;line-height:12.9px;color:#141414;transform:scaleX(0.8497);font-weight:700;">CONTROLE</span>
<div style="left:445px;top:254.8px;width:138.20000000000005px;height:26.399999999999977px;background:#ff3699;border-radius:13.199999999999989px;"></div>
<span class="t" style="left:489.20px;top:261.88px;font-size:12.9px;line-height:12.9px;color:#ffffff;transform:scaleX(0.8926);font-weight:700;">AGENDA</span>
<div style="left:585.8px;top:254.8px;width:138.0px;height:26.399999999999977px;background:#fed0e0;border-radius:13.199999999999989px;border:1.1px solid #d2578f;"></div>
<span class="t" style="left:620.00px;top:261.88px;font-size:12.9px;line-height:12.9px;color:#141414;transform:scaleX(0.8432);font-weight:700;">RELATÓRIOS</span>
<div style="left:724.5px;top:254.8px;width:136.29999999999995px;height:26.399999999999977px;background:#fed0e0;border-radius:13.199999999999989px;border:1.1px solid #d2578f;"></div>
<span class="t" style="left:753.00px;top:261.88px;font-size:12.9px;line-height:12.9px;color:#141414;transform:scaleX(0.8567);font-weight:700;">DASHBOARDS</span>
<div style="left:863.2px;top:254.8px;width:138.5999999999999px;height:26.399999999999977px;background:#fed0e0;border-radius:13.199999999999989px;border:1.1px solid #d2578f;"></div>
<span class="t" style="left:896.80px;top:261.88px;font-size:12.9px;line-height:12.9px;color:#141414;transform:scaleX(0.8479);font-weight:700;">INSTRUÇÕES</span>
<div style="left:195px;top:295.6px;width:138.2px;height:27.0px;background:#fed0e0;border-radius:13.5px;border:1.1px solid #d2578f;"></div>
<span class="t" style="left:234.20px;top:303.48px;font-size:12.9px;line-height:12.9px;color:#141414;transform:scaleX(0.9072);font-weight:700;">Agenda 01</span>
<div style="left:343.8px;top:295.6px;width:138.2px;height:27.0px;background:#ff3699;border-radius:13.5px;"></div>
<span class="t" style="left:382.60px;top:303.48px;font-size:12.9px;line-height:12.9px;color:#ffffff;transform:scaleX(0.9164);font-weight:700;">Agenda 02</span>
<div style="left:490px;top:295.6px;width:138px;height:27.0px;background:#fed0e0;border-radius:13.5px;border:1.1px solid #d2578f;"></div>
<span class="t" style="left:529.20px;top:303.48px;font-size:12.9px;line-height:12.9px;color:#141414;transform:scaleX(0.9164);font-weight:700;">Agenda 03</span>
<div style="left:638.8px;top:295.6px;width:138.70000000000005px;height:27.0px;background:#fed0e0;border-radius:13.5px;border:1.1px solid #d2578f;"></div>
<span class="t" style="left:678.20px;top:303.48px;font-size:12.9px;line-height:12.9px;color:#141414;transform:scaleX(0.9056);font-weight:700;">Agenda 04</span>
<svg style="left:26px;top:240px;" width="110" height="105" viewBox="0 0 110 105">
<defs><clipPath id="lg"><rect x="0" y="3.8" width="110" height="97.8"/></clipPath></defs>
<g clip-path="url(#lg)">
<g transform="translate(51.8 44.4) rotate(-39.6)">
 <path d="M-1.6 3.4Q2 -0.8 7 -3.2H20V3.2H9Q3 5.6 -1.6 3.4Z" fill="#f58fcb" stroke="#111" stroke-width="2.3" stroke-linejoin="round"/>
 <rect x="19" y="-3.2" width="10.6" height="6.4" fill="#f6dc7a" stroke="#111" stroke-width="2.3"/>
 <path d="M36 -7.8H50.4Q58.2 -7.8 58.2 0Q58.2 7.8 50.4 7.8H36Z" fill="#2f5878" stroke="#111" stroke-width="2.5"/>
 <path d="M38.4 -5.8H49.4Q54.4 -5.6 55.8 -2.4H38.4Z" fill="#41708f" opacity="0.7"/>
 <rect x="29.4" y="-8.2" width="7.4" height="16.4" rx="1" fill="#ffffff" stroke="#111" stroke-width="2.3"/>
</g>
<path d="M4.8 104V66A13.3 13.3 0 0 1 31.4 66V104Z" fill="#fddccb"/>
<path d="M31.4 104V55.6A13.7 13.7 0 0 1 58.8 55.6V104Z" fill="#fddccb"/>
<path d="M58.8 104V74.4A13.7 13.7 0 0 1 86.2 74.4V104Z" fill="#fddccb"/>
<path d="M24 104V80H31.4V104ZM51 104V70H58.8V104ZM78.6 104V88H86.2V104Z" fill="#f9cdb6" opacity="0.55"/>
<path d="M4.8 101.6V66A13.3 13.3 0 0 1 31.4 66V101.6M31.4 66V55.6A13.7 13.7 0 0 1 58.8 55.6V101.6M58.8 74.4A13.7 13.7 0 0 1 86.2 74.4V86M86.2 90.4V101.6" fill="none" stroke="#111" stroke-width="2.5" stroke-linecap="round"/>
<path d="M10.4 47.8Q10.4 45.6 12.6 45.6H24.8Q27 45.6 27 47.8V66.6A8.3 8.3 0 0 1 10.4 66.6Z" fill="#f564bb" stroke="#111" stroke-width="2.5"/>
<path d="M37.2 37.4Q37.2 35.2 39.4 35.2H50.4Q52.6 35.2 52.6 37.4V55.6A7.7 7.7 0 0 1 37.2 55.6Z" fill="#f564bb" stroke="#111" stroke-width="2.5"/>
<path d="M63.8 55.4Q63.8 53.2 66 53.2H78.2Q80.4 53.2 80.4 55.4V73.4A8.3 8.3 0 0 1 63.8 73.4Z" fill="#f564bb" stroke="#111" stroke-width="2.5"/>
<path d="M21 47V68Q20 72 18.6 73.6Q25 73 25.8 66.6V47Z" fill="#e84fa9" opacity="0.55"/>
<path d="M47 36.6V57Q46 60.6 44.8 62Q50.8 61.4 51.4 55.6V36.6Z" fill="#e84fa9" opacity="0.55"/>
<path d="M74.6 54.6V75Q73.6 79 72.2 80.4Q78.6 79.8 79.2 73.4V54.6Z" fill="#e84fa9" opacity="0.55"/>
<path d="M12 82.2Q18.6 85 26 82.2M38 70.4Q45 73.2 52.4 70.4M64.8 88.6Q72 91.4 79.4 88.6" fill="none" stroke="#111" stroke-width="2.3" stroke-linecap="round"/>
</g></svg>
<div style="left:143.4px;top:343px;width:221px;height:24px;background:#d9d9d9;"></div>
<div style="left:367.5px;top:343px;width:240.8px;height:24px;background:#d9d9d9;"></div>
<span class="t" style="left:239.60px;top:350.58px;font-size:12.9px;line-height:12.9px;color:#3f3f3f;transform:scaleX(0.9936);font-weight:700;">Data</span>
<span class="t" style="left:454.50px;top:350.58px;font-size:12.9px;line-height:12.9px;color:#3f3f3f;transform:scaleX(0.9151);font-weight:700;">Profissional</span>
<div style="left:142.6px;top:367px;width:223px;height:29.6px;background:#fff;border:1px solid #d4d4d4;"></div>
<span class="t" style="left:218.80px;top:376.58px;font-size:12.9px;line-height:12.9px;color:#1c1c1c;transform:scaleX(1.1000);">04/01/2026</span>
<div style="left:365.1px;top:366.7px;width:245.6px;height:30px;background:#fff;border:1.8px solid #22633f;"></div>
<div style="left:607.9px;top:393.9px;width:4.8px;height:4.8px;background:#22633f;border:1px solid #fff;"></div>
<span class="t" style="left:455.20px;top:376.58px;font-size:12.9px;line-height:12.9px;color:#1c1c1c;transform:scaleX(0.9266);">Carla Souza</span>
<div style="left:610.9px;top:377.7px;width:16.2px;height:16.6px;background:#fbfbfd;border:1px solid #b4b4bd;"></div>
<svg style="left:615.8px;top:384.6px;" width="6.4" height="3.6" viewBox="0 0 6.4 3.6"><path d="M0 0H6.4L3.2 3.6Z" fill="#444"/></svg>
<div style="left:55px;top:409.4px;width:85.6px;height:35.6px;background:#d9d9d9;"></div>
<span class="t" style="left:66.20px;top:421.98px;font-size:12.9px;line-height:12.9px;color:#3f3f3f;transform:scaleX(0.9659);font-weight:700;">Horário</span>
<div style="left:143.4px;top:409.4px;width:220.9px;height:35.6px;background:#d9d9d9;"></div>
<span class="t" style="left:154.80px;top:421.98px;font-size:12.9px;line-height:12.9px;color:#3f3f3f;transform:scaleX(0.9576);font-weight:700;">Cliente</span>
<div style="left:367.5px;top:409.4px;width:240.70000000000005px;height:35.6px;background:#d9d9d9;"></div>
<span class="t" style="left:379.00px;top:421.98px;font-size:12.9px;line-height:12.9px;color:#3f3f3f;transform:scaleX(0.9151);font-weight:700;">Profissional</span>
<div style="left:611px;top:409.4px;width:303px;height:35.6px;background:#d9d9d9;"></div>
<span class="t" style="left:622.40px;top:421.98px;font-size:12.9px;line-height:12.9px;color:#3f3f3f;transform:scaleX(0.9641);font-weight:700;">Procedimento</span>
<div style="left:917px;top:409.4px;width:159px;height:35.6px;background:#d9d9d9;"></div>
<span class="t" style="left:928.20px;top:421.98px;font-size:12.9px;line-height:12.9px;color:#3f3f3f;transform:scaleX(0.9646);font-weight:700;">Valor</span>
<div style="left:1079px;top:409.4px;width:151px;height:35.6px;background:#d9d9d9;"></div>
<span class="t" style="left:1089.80px;top:421.98px;font-size:12.9px;line-height:12.9px;color:#3f3f3f;transform:scaleX(0.9226);font-weight:700;">Status</span>
<div style="left:124.6px;top:426.8px;width:16.4px;height:16.6px;background:#fbfbfd;border:1px solid #b4b4bd;"></div>
<svg style="left:129.6px;top:433.70000000000005px;" width="6.4" height="3.6" viewBox="0 0 6.4 3.6"><path d="M0 0H6.4L3.2 3.6Z" fill="#444"/></svg>
<div style="left:348.8px;top:426.8px;width:16.4px;height:16.6px;background:#fbfbfd;border:1px solid #b4b4bd;"></div>
<svg style="left:353.8px;top:433.70000000000005px;" width="6.4" height="3.6" viewBox="0 0 6.4 3.6"><path d="M0 0H6.4L3.2 3.6Z" fill="#444"/></svg>
<div style="left:592.2px;top:426.8px;width:16.4px;height:16.6px;background:#fbfbfd;border:1px solid #b4b4bd;"></div>
<svg style="left:594.8000000000001px;top:431.2px;" width="12" height="9.6" viewBox="0 0 12 9.6"><path d="M0.4 5.6H5.6L3 8.4Z" fill="#444"/><path d="M8.4 0.4V6.8M6.8 5L8.4 7L10 5" stroke="#444" stroke-width="1" fill="none"/></svg>
<div style="left:897.6px;top:426.8px;width:16.4px;height:16.6px;background:#fbfbfd;border:1px solid #b4b4bd;"></div>
<svg style="left:902.6px;top:433.70000000000005px;" width="6.4" height="3.6" viewBox="0 0 6.4 3.6"><path d="M0 0H6.4L3.2 3.6Z" fill="#444"/></svg>
<div style="left:1059.2px;top:426.8px;width:16.4px;height:16.6px;background:#fbfbfd;border:1px solid #b4b4bd;"></div>
<svg style="left:1064.2px;top:433.70000000000005px;" width="6.4" height="3.6" viewBox="0 0 6.4 3.6"><path d="M0 0H6.4L3.2 3.6Z" fill="#444"/></svg>
<div style="left:1213.6px;top:426.8px;width:16.4px;height:16.6px;background:#fbfbfd;border:1px solid #b4b4bd;"></div>
<svg style="left:1218.6px;top:433.70000000000005px;" width="6.4" height="3.6" viewBox="0 0 6.4 3.6"><path d="M0 0H6.4L3.2 3.6Z" fill="#444"/></svg>
<div style="left:142.8px;top:445.5px;width:1088.8px;height:398px;background:#f2f2f2;"></div>
<div style="left:55px;top:446.6px;width:85.7px;height:34.6px;background:#d9d9d9;"></div>
<div style="left:55px;top:484.1px;width:85.7px;height:34.6px;background:#d9d9d9;"></div>
<div style="left:55px;top:521.6px;width:85.7px;height:34.6px;background:#d9d9d9;"></div>
<div style="left:55px;top:559.1px;width:85.7px;height:34.6px;background:#d9d9d9;"></div>
<div style="left:55px;top:596.6px;width:85.7px;height:34.6px;background:#d9d9d9;"></div>
<div style="left:55px;top:634.1px;width:85.7px;height:34.6px;background:#d9d9d9;"></div>
<div style="left:55px;top:671.6px;width:85.7px;height:34.6px;background:#d9d9d9;"></div>
<div style="left:55px;top:709.1px;width:85.7px;height:34.6px;background:#d9d9d9;"></div>
<div style="left:55px;top:746.6px;width:85.7px;height:34.6px;background:#d9d9d9;"></div>
<div style="left:55px;top:784.1px;width:85.7px;height:34.6px;background:#d9d9d9;"></div>
<div style="left:55px;top:821.6px;width:85.7px;height:21.4px;background:#d9d9d9;"></div>
<div style="left:142.8px;top:482.0px;width:1088.8px;height:1px;background:#dcdcdc;"></div>
<div style="left:142.8px;top:519.5px;width:1088.8px;height:1px;background:#dcdcdc;"></div>
<div style="left:142.8px;top:557.0px;width:1088.8px;height:1px;background:#dcdcdc;"></div>
<div style="left:142.8px;top:594.5px;width:1088.8px;height:1px;background:#dcdcdc;"></div>
<div style="left:142.8px;top:632.0px;width:1088.8px;height:1px;background:#dcdcdc;"></div>
<div style="left:142.8px;top:669.5px;width:1088.8px;height:1px;background:#dcdcdc;"></div>
<div style="left:142.8px;top:707.0px;width:1088.8px;height:1px;background:#dcdcdc;"></div>
<div style="left:142.8px;top:744.5px;width:1088.8px;height:1px;background:#dcdcdc;"></div>
<div style="left:142.8px;top:782.0px;width:1088.8px;height:1px;background:#dcdcdc;"></div>
<div style="left:142.8px;top:819.5px;width:1088.8px;height:1px;background:#dcdcdc;"></div>
<div style="left:365.5px;top:445.5px;width:1px;height:398px;background:#dcdcdc;"></div>
<div style="left:608.9px;top:445.5px;width:1px;height:398px;background:#dcdcdc;"></div>
<div style="left:914.7px;top:445.5px;width:1px;height:398px;background:#dcdcdc;"></div>
<div style="left:1076.8px;top:445.5px;width:1px;height:398px;background:#dcdcdc;"></div>
<div style="left:1078px;top:445.8px;width:153.6px;height:36.7px;background:#c00000;"></div>
<span class="t" style="left:1089.13px;top:459.18px;font-size:12.9px;line-height:12.9px;color:#ffe3e3;transform:scaleX(0.9656);">Desmarcada</span>
<span class="t" style="left:66.00px;top:459.78px;font-size:12.9px;line-height:12.9px;color:#3f3f3f;transform:scaleX(1.0373);font-weight:700;">8:00</span>
<span class="t" style="left:153.82px;top:459.18px;font-size:12.9px;line-height:12.9px;color:#1c1c1c;transform:scaleX(0.9775);">Fernanda Lima</span>
<span class="t" style="left:378.60px;top:459.18px;font-size:12.9px;line-height:12.9px;color:#1c1c1c;transform:scaleX(0.9252);">Carla Souza</span>
<span class="t" style="left:621.20px;top:459.18px;font-size:12.9px;line-height:12.9px;color:#1c1c1c;transform:scaleX(0.9331);">Spa dos Pés</span>
<span class="t" style="left:926.79px;top:459.18px;font-size:12.9px;line-height:12.9px;color:#1c1c1c;transform:scaleX(1.0086);">R$ 70,00</span>
<div style="left:1078px;top:482.5px;width:153.6px;height:37.5px;background:#ffc000;"></div>
<div style="left:1078px;top:482.2px;width:153.6px;height:0.8px;background:rgba(255,255,255,0.35);"></div>
<span class="t" style="left:1089.50px;top:496.68px;font-size:12.9px;line-height:12.9px;color:#3d2b00;transform:scaleX(1.0003);">Marcada</span>
<span class="t" style="left:66.00px;top:497.28px;font-size:12.9px;line-height:12.9px;color:#3f3f3f;transform:scaleX(1.0373);font-weight:700;">9:00</span>
<span class="t" style="left:154.60px;top:496.68px;font-size:12.9px;line-height:12.9px;color:#1c1c1c;transform:scaleX(0.9785);">Juliana Alves</span>
<span class="t" style="left:378.60px;top:496.68px;font-size:12.9px;line-height:12.9px;color:#1c1c1c;transform:scaleX(0.9252);">Carla Souza</span>
<span class="t" style="left:621.57px;top:496.68px;font-size:12.9px;line-height:12.9px;color:#1c1c1c;transform:scaleX(1.0335);">Manicure Tradicional</span>
<span class="t" style="left:926.79px;top:496.68px;font-size:12.9px;line-height:12.9px;color:#1c1c1c;transform:scaleX(1.0086);">R$ 70,00</span>
<div style="left:1078px;top:520.0px;width:153.6px;height:37.5px;background:#375623;"></div>
<div style="left:1078px;top:519.7px;width:153.6px;height:0.8px;background:rgba(255,255,255,0.35);"></div>
<span class="t" style="left:1089.37px;top:534.18px;font-size:12.9px;line-height:12.9px;color:#e4efdc;transform:scaleX(0.9342);">Realizada</span>
<span class="t" style="left:66.40px;top:534.78px;font-size:12.9px;line-height:12.9px;color:#3f3f3f;transform:scaleX(1.0239);font-weight:700;">10:00</span>
<span class="t" style="left:153.98px;top:534.18px;font-size:12.9px;line-height:12.9px;color:#1c1c1c;transform:scaleX(1.0152);">Mariana Santos</span>
<span class="t" style="left:378.60px;top:534.18px;font-size:12.9px;line-height:12.9px;color:#1c1c1c;transform:scaleX(0.9252);">Carla Souza</span>
<span class="t" style="left:621.59px;top:534.18px;font-size:12.9px;line-height:12.9px;color:#1c1c1c;transform:scaleX(1.0093);">Pedicure Tradicional</span>
<span class="t" style="left:926.79px;top:534.18px;font-size:12.9px;line-height:12.9px;color:#1c1c1c;transform:scaleX(1.0086);">R$ 90,00</span>
<div style="left:1078px;top:557.5px;width:153.6px;height:37.5px;background:#375623;"></div>
<div style="left:1078px;top:557.3px;width:153.6px;height:1px;background:#a3bd93;"></div>
<span class="t" style="left:1089.37px;top:571.68px;font-size:12.9px;line-height:12.9px;color:#e4efdc;transform:scaleX(0.9342);">Realizada</span>
<span class="t" style="left:66.40px;top:572.28px;font-size:12.9px;line-height:12.9px;color:#3f3f3f;transform:scaleX(1.0468);font-weight:700;">11:00</span>
<span class="t" style="left:154.00px;top:571.68px;font-size:12.9px;line-height:12.9px;color:#1c1c1c;transform:scaleX(0.9954);">Patrícia Gomes</span>
<span class="t" style="left:378.60px;top:571.68px;font-size:12.9px;line-height:12.9px;color:#1c1c1c;transform:scaleX(0.9252);">Carla Souza</span>
<span class="t" style="left:621.60px;top:571.68px;font-size:12.9px;line-height:12.9px;color:#1c1c1c;transform:scaleX(0.9982);">Manicure com Esmaltação em Gel</span>
<span class="t" style="left:926.79px;top:571.68px;font-size:12.9px;line-height:12.9px;color:#1c1c1c;transform:scaleX(1.0086);">R$ 70,00</span>
<div style="left:0px;top:444.8px;width:1578.6px;height:1.1px;background:#a3a3a3;"></div>
<div style="left:1298.8px;top:342px;width:154.4px;height:26px;background:#f1f1f1;"></div>
<span class="t" style="left:1302.40px;top:349.48px;font-size:12.9px;line-height:12.9px;color:#fbfbfb;transform:scaleX(0.9570);">46026Carla Souza</span>
<div style="left:1578.6px;top:224px;width:21.4px;height:620px;background:#e7e9ed;"></div>
<div style="left:1580.6px;top:225px;width:18.4px;height:619.4px;background:#f4f4f4;border-radius:9.2px;"></div>
<svg style="left:1585px;top:230px;" width="9.4" height="6.8" viewBox="0 0 9.4 6.8"><path d="M4.7 0.4Q5.1 0.4 5.5 0.9L9 5.4Q9.4 6.4 8.4 6.4H1Q0 6.4 0.4 5.4L3.9 0.9Q4.3 0.4 4.7 0.4Z" fill="#6b6b6b"/></svg>
<div style="left:1585.4px;top:241.4px;width:8.8px;height:17.8px;background:#6b6b6b;border-radius:4.4px;"></div>
<svg style="left:1585px;top:833px;" width="9.4" height="6.8" viewBox="0 0 9.4 6.8"><path d="M4.7 6.4Q5.1 6.4 5.5 5.9L9 1.4Q9.4 0.4 8.4 0.4H1Q0 0.4 0.4 1.4L3.9 5.9Q4.3 6.4 4.7 6.4Z" fill="#6b6b6b"/></svg>
<div style="left:0px;top:843.3px;width:1578.6px;height:34px;background:#e7e9ed;"></div>
<div style="left:1578.6px;top:844.6px;width:21.4px;height:33px;background:#e7e9ed;"></div>
<div style="left:15.5px;top:854.7px;width:2.6px;height:2.6px;background:#3a3a3a;border-radius:1.3px;"></div>
<div style="left:15.5px;top:859.3px;width:2.6px;height:2.6px;background:#3a3a3a;border-radius:1.3px;"></div>
<div style="left:15.5px;top:863.8px;width:2.6px;height:2.6px;background:#3a3a3a;border-radius:1.3px;"></div>
<div style="left:33px;top:851px;width:1545.4px;height:17.2px;background:#f5f5f5;border-radius:8.6px;"></div>
<svg style="left:39px;top:855px;" width="7" height="9.4" viewBox="0 0 7 9.4"><path d="M0.4 4.7Q0.4 4.3 0.9 3.9L5.4 0.4Q6.6 0 6.6 1V8.4Q6.6 9.4 5.4 9L0.9 5.5Q0.4 5.1 0.4 4.7Z" fill="#6b6b6b"/></svg>
<div style="left:50.8px;top:855.1px;width:1022.4px;height:8.7px;background:#6f6f6f;border-radius:4.4px;"></div>
<svg style="left:1566.6px;top:855px;" width="7" height="9.4" viewBox="0 0 7 9.4"><path d="M6.6 4.7Q6.6 4.3 6.1 3.9L1.6 0.4Q0.4 0 0.4 1V8.4Q0.4 9.4 1.6 9L6.1 5.5Q6.6 5.1 6.6 4.7Z" fill="#6b6b6b"/></svg>
<div style="left:0px;top:877.6px;width:1600px;height:22.4px;background:#f5f5f5;"></div>
<span class="t" style="left:12.00px;top:883.98px;font-size:10.3px;line-height:10.3px;color:#3d3d3d;transform:scaleX(1.0452);">Pronto</span>
<svg style="left:66px;top:881.6px;" width="16" height="14" viewBox="0 0 16 14">
<path d="M0.9 1.2H14.1V5M0.9 1.2V12H6" fill="none" stroke="#3a3a3a" stroke-width="1.3"/>
<path d="M0.9 2.2H14.1" stroke="#3a3a3a" stroke-width="2"/>
<path d="M2.8 5.4H5.6M2.8 7.6H4.8M2.8 9.8H4.8" stroke="#3a3a3a" stroke-width="1"/>
<circle cx="9.8" cy="9.2" r="4.3" fill="#f5f5f5" stroke="#3a3a3a" stroke-width="1.3"/>
<circle cx="9.8" cy="9.2" r="1.9" fill="#2e2e2e"/></svg>
<svg style="left:87.6px;top:869.6px;" width="30" height="30" viewBox="0 0 30 30">
<g transform="scale(0.8)">
<circle cx="23.4" cy="17.4" r="2.3" fill="#f5f5f5" stroke="#2f2f2f" stroke-width="1.5"/>
<path d="M16.6 21.2Q16.2 19.6 17.8 19.8L21.6 21H25.2L29 19.8Q30.6 19.6 30.2 21.2Q29.8 22 28.8 22.2L26 23.2V25.4L27.8 30.6Q28 32 26.8 32Q25.8 32 25.4 30.8L23.4 26.4L21.4 30.8Q21 32 20 32Q18.8 32 19 30.6L20.8 25.4V23.2L18 22.2Q17 22 16.6 21.2Z" fill="#f5f5f5" stroke="#2f2f2f" stroke-width="1.5" stroke-linejoin="round"/>
</g>
<rect x="20.6" y="20.4" width="7" height="7.4" fill="#f5f5f5"/>
<path d="M21.2 21.2L26.2 26.8M26.2 21.2L21.2 26.8" stroke="#2f2f2f" stroke-width="1.2"/></svg>
<span class="t" style="left:118.00px;top:883.93px;font-size:10.6px;line-height:10.6px;color:#262626;transform:scaleX(0.9985);font-weight:700;">Acessibilidade: investigar</span>
<svg style="left:1156px;top:881.2px;" width="16.4" height="15.4" viewBox="0 0 16.4 15.4">
<path d="M7 10H1V1H13.4V5.4" fill="none" stroke="#333" stroke-width="1.1"/>
<path d="M4 12.6H7.4M5.6 10V12.6" stroke="#333" stroke-width="1.1"/>
<circle cx="11.6" cy="10.6" r="2.3" fill="none" stroke="#333" stroke-width="1.3"/>
<path d="M11.6 6.4V8M11.6 13.2V14.8M7.4 10.6H9M14.2 10.6H15.8M8.6 7.6L9.8 8.8M13.4 12.4L14.6 13.6M14.6 7.6L13.4 8.8M9.8 12.4L8.6 13.6" stroke="#333" stroke-width="1.2"/></svg>
<span class="t" style="left:1174.00px;top:883.26px;font-size:10.8px;line-height:10.8px;color:#333;transform:scaleX(0.9977);">Exibir Configurações</span>
<div style="left:1295px;top:877.5px;width:41.6px;height:22.5px;background:#dedede;"></div>
<svg style="left:1308.4px;top:881px;" width="14" height="14" viewBox="0 0 14 14"><path d="M0.7 0.7H13.3V13.3H0.7ZM0.7 4.9H13.3M0.7 9.1H13.3M4.9 0.7V13.3M9.1 0.7V13.3" fill="none" stroke="#2e2e2e" stroke-width="1.5"/></svg>
<svg style="left:1350.2px;top:881px;" width="14.4" height="14" viewBox="0 0 14.4 14"><path d="M0.7 0.7H13.7V13.3H0.7Z" fill="none" stroke="#333" stroke-width="1.3"/><path d="M3.6 3.2H10.8V11.6H3.6ZM5.2 5.4H9.2M5.2 7.2H9.2M5.2 9H9.2" fill="none" stroke="#333" stroke-width="1"/></svg>
<svg style="left:1392px;top:881px;" width="14.4" height="14" viewBox="0 0 14.4 14"><path d="M0.7 0.7H13.7V13.3H0.7Z" fill="none" stroke="#333" stroke-width="1.3"/><path d="M5.4 0.7V7.6M0.7 8.4H9V0.7" fill="none" stroke="#333" stroke-width="1.2"/></svg>
<div style="left:1426.2px;top:888px;width:8px;height:1.1px;background:#444;"></div>
<div style="left:1439px;top:888px;width:104.6px;height:1px;background:#7a7a7a;"></div>
<div style="left:1484.6px;top:882.6px;width:3px;height:12px;background:#444;border-radius:1px;"></div>
<div style="left:1483.4px;top:887.4px;width:5.4px;height:2.2px;background:#444;"></div>
<div style="left:1548.4px;top:888px;width:8px;height:1.1px;background:#444;"></div>
<div style="left:1551.9px;top:884.5px;width:1.1px;height:8px;background:#444;"></div>
<span class="t" style="left:1570.40px;top:883.60px;font-size:10.4px;line-height:10.4px;color:#333;transform:scaleX(0.9437);">90%</span>
</div></body></html>
